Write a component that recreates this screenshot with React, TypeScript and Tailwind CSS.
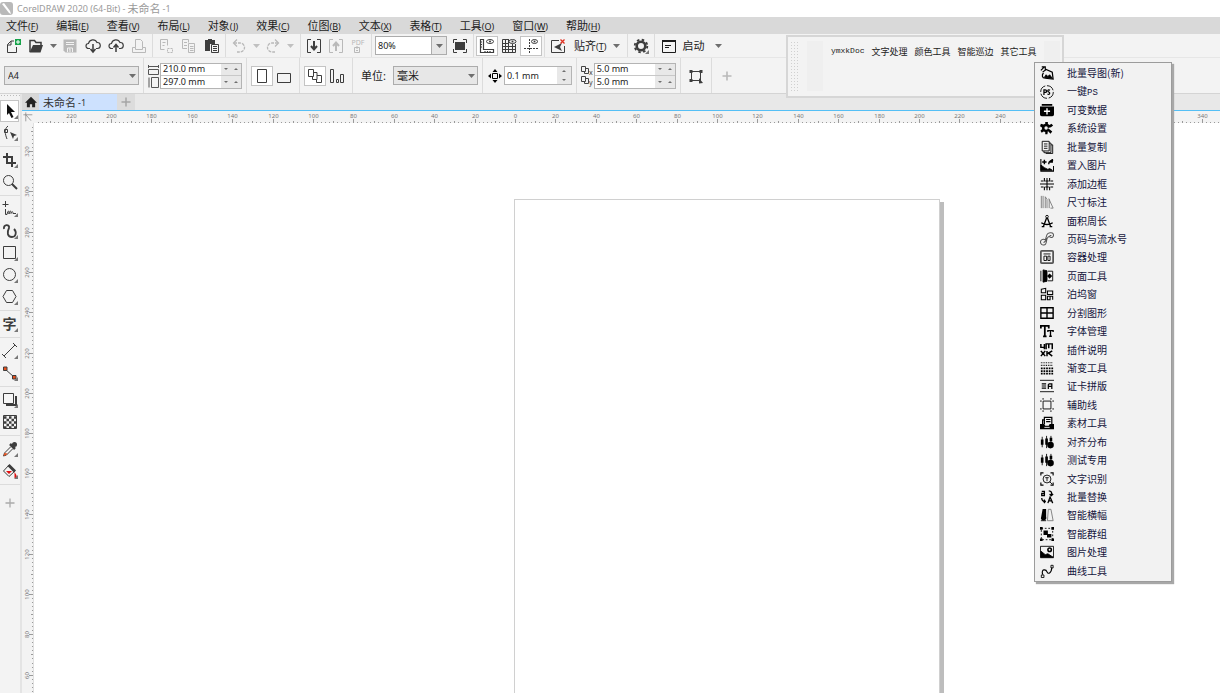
import type { ReactNode } from 'react';

interface IconProps {
  size?: number;
  children: ReactNode;
}

// All icons are drawn on a 16 unit grid
const Icon = ({ size = 16, children }: IconProps) => (
  <svg
    width={size}
    height={size}
    viewBox="0 0 16 16"
    fill="none"
    stroke="currentColor"
    className="shrink-0"
    aria-hidden="true"
  >
    {children}
  </svg>
);

const Caret = () => (
  <svg width="7" height="4" viewBox="0 0 7 4" className="shrink-0" aria-hidden="true">
    <path d="M0 0h7L3.5 4z" fill="currentColor" />
  </svg>
);

interface ToolButtonProps {
  label: string;
  children: ReactNode;
  disabled?: boolean;
  active?: boolean;
}

const ToolButton = ({ label, children, disabled, active }: ToolButtonProps) => (
  <button
    type="button"
    aria-label={label}
    disabled={disabled}
    className={`flex h-5 w-[22px] items-center justify-center border ${
      active ? 'border-[#c4c4c4] bg-white' : 'border-transparent'
    } ${disabled ? 'text-[#b9b9b9]' : 'text-[#3d3d3d]'}`}
  >
    {children}
  </button>
);

const CaretButton = ({ label, disabled }: { label: string; disabled?: boolean }) => (
  <button
    type="button"
    aria-label={label}
    disabled={disabled}
    className={`flex h-5 w-[10px] items-center justify-center ${disabled ? 'text-[#c0c0c0]' : 'text-[#6e6e6e]'}`}
  >
    <Caret />
  </button>
);

const Divider = () => <div className="mx-px w-px self-stretch bg-[#dcdcdc]" />;

const menus = [
  ['文件', 'F'],
  ['编辑', 'E'],
  ['查看', 'V'],
  ['布局', 'L'],
  ['对象', 'J'],
  ['效果', 'C'],
  ['位图', 'B'],
  ['文本', 'X'],
  ['表格', 'T'],
  ['工具', 'O'],
  ['窗口', 'W'],
  ['帮助', 'H'],
];

const TitleBar = () => (
  <header className="flex h-[17px] shrink-0 items-center gap-1 bg-white text-[#9a9a9a]">
    <svg width="13" height="15" viewBox="0 0 13 15" aria-hidden="true">
      <rect x="0" y="1" width="13" height="13" rx="3" fill="#b9b9b9" />
      <path d="M2 3l7 9 2 1-1-3L4 2z" fill="#fff" />
    </svg>
    <h1 className="flex items-center gap-[2px] text-[11px]">
      <span className="text-[9px]">CorelDRAW 2020 (64-Bit) -</span>
      未命名
      <span className="text-[9px]">-1</span>
    </h1>
  </header>
);

const MenuBar = () => (
  <nav className="flex h-[17px] shrink-0 items-center gap-[18px] bg-[#d9d9d9] pl-[6px]">
    {menus.map(([name, key]) => (
      <button key={key} type="button" className="flex items-baseline text-[11px] text-[#1c1c1c]">
        {name}
        <span className="text-[9px]">
          (<u>{key}</u>)
        </span>
      </button>
    ))}
  </nav>
);

const StandardBar = () => (
  <div className="flex h-6 shrink-0 items-center gap-px border-b border-[#e6e6e6] bg-[#f3f3f3] pl-[2px]">
    <ToolButton label="新建">
      <Icon>
        <path d="M9 3H6L2.500 6.500V14.500h9V9M6 3v4H2.500" />
        <path d="M10 1h6v6h-6z" fill="#17a34a" stroke="none" />
        <path d="M13 2v4M11 4h4" stroke="#fff" />
      </Icon>
    </ToolButton>
    <ToolButton label="打开">
      <Icon>
        <path d="M2 14V2.500h4.500L8 4.500h5V7" strokeWidth="1.500" />
        <path d="M1.500 14.500L5 7h10l-2.500 7.500z" fill="currentColor" stroke="none" />
      </Icon>
    </ToolButton>
    <CaretButton label="最近打开" />
    <ToolButton label="保存" disabled>
      <Icon>
        <path d="M1.500 1.500h13v13h-11l-2-2z" fill="currentColor" stroke="none" />
        <path d="M4 4.500h8M4 6.500h8M5.500 14v-4h5v4" stroke="#f3f3f3" />
        <path d="M7 11h1v3" stroke="#f3f3f3" />
      </Icon>
    </ToolButton>
    <ToolButton label="从云下载">
      <Icon>
        <path d="M5 10.500H3.500a2.500 2.500 0 010-5 4.500 4.500 0 018.500-1 3 3 0 01.5 6H11" strokeWidth="1.200" />
        <path d="M8 6v7M5.500 11L8 14l2.500-3" strokeWidth="1.500" />
      </Icon>
    </ToolButton>
    <ToolButton label="上传到云">
      <Icon>
        <path d="M5 10.500H3.500a2.500 2.500 0 010-5 4.500 4.500 0 018.500-1 3 3 0 01.5 6H11" strokeWidth="1.200" />
        <path d="M8 14V7M5.500 9.500L8 6.500l2.500 3" strokeWidth="1.500" />
      </Icon>
    </ToolButton>
    <ToolButton label="打印" disabled>
      <Icon>
        <path d="M4.500 9.500v-8h5l2 2v6M1.500 9.500h3v2h7v-2h3v5h-13z" />
      </Icon>
    </ToolButton>
    <Divider />
    <ToolButton label="剪切" disabled>
      <Icon>
        <path d="M2.500 1.500h7v6M2.500 1.500v10h4M4.500 4.500h3M4.500 7.500h2" />
        <path d="M9.500 10.500h5v4h-5z" strokeDasharray="2 1" />
      </Icon>
    </ToolButton>
    <ToolButton label="复制" disabled>
      <Icon>
        <path d="M6 10.500H1.500v-9h6v3M3 4.500h3M3 7.500h3M7.500 5.500h6v9h-6zM9 8.500h3.500M9 10.500h3.500M9 12.500h3.500" />
      </Icon>
    </ToolButton>
    <ToolButton label="粘贴">
      <Icon>
        <path d="M1 2h3V1h4v1h3v4H6v7H1z" fill="currentColor" stroke="none" />
        <path d="M7.500 6.500h7v8h-7zM9 8.500h4M9 10.500h4M9 12.500h4" />
      </Icon>
    </ToolButton>
    <Divider />
    <div className="flex items-center gap-px pr-[3px]">
      <ToolButton label="撤销" disabled>
        <Icon>
          <path d="M3 5h6a4.500 4.500 0 010 9H6" strokeDasharray="3 1" strokeWidth="1.300" />
          <path d="M6 1.500L2.500 5 6 8.500" strokeWidth="1.300" />
        </Icon>
      </ToolButton>
      <CaretButton label="撤销列表" disabled />
      <ToolButton label="重做" disabled>
        <Icon>
          <path d="M13 5H7a4.500 4.500 0 000 9h3" strokeDasharray="3 1" strokeWidth="1.300" />
          <path d="M10 1.500L13.500 5 10 8.500" strokeWidth="1.300" />
        </Icon>
      </ToolButton>
      <CaretButton label="重做列表" disabled />
    </div>
    <Divider />
    <div className="flex items-center">
      <ToolButton label="导入">
        <Icon>
          <path d="M5 1.500H1.500v13H5M11 1.500h3.500v13H11" />
          <path d="M8 3v8M5 8l3 3.500L11 8" strokeWidth="2" />
        </Icon>
      </ToolButton>
      <ToolButton label="导出" disabled>
        <Icon>
          <path d="M5 1.500H1.500v13H5M11 1.500h3.500v13H11" />
          <path d="M8 13V5M5 8l3-3.500L11 8" strokeWidth="2" />
        </Icon>
      </ToolButton>
      <button
        type="button"
        disabled
        aria-label="发布为 PDF"
        className="flex w-[22px] flex-col items-center text-[7px] leading-[7px] text-[#b9b9b9]"
      >
        PDF
        <svg width="8" height="7" viewBox="0 0 8 7" fill="none" stroke="currentColor" aria-hidden="true">
          <path d="M.5 1.500h5v5h-5zM2 4.500h2M3 0v3" />
        </svg>
      </button>
    </div>
    <Divider />
    <div className="mx-px flex h-[19px] w-[72px] border border-[#acacac] bg-white">
      <input aria-label="缩放级别" defaultValue="80%" className="min-w-0 flex-1 pl-[2px] text-[9px] text-[#222] outline-none" />
      <button
        type="button"
        aria-label="选择缩放级别"
        className="flex w-[15px] items-center justify-center border-l border-[#acacac] bg-[#e6e6e6] text-[#6e6e6e]"
      >
        <Caret />
      </button>
    </div>
    <div className="flex items-center">
      <ToolButton label="全屏预览">
        <Icon>
          <path d="M3 4h10v8H3z" fill="currentColor" stroke="none" />
          <path d="M1.500 5V1.500H5M11 1.500h3.500V5M14.500 11v3.500H11M5 14.500H1.500V11" />
        </Icon>
      </ToolButton>
    </div>
    <Divider />
    <div className="flex items-center">
      <ToolButton label="显示标尺" active>
        <Icon>
          <path d="M1.500 1.500h3v10h10v3h-13zM2 4h1M2 6.500h1M2 9h1M6 14v-1M8.500 14v-1M11 14v-1" strokeWidth="1.200" />
          <ellipse cx="11" cy="3.500" rx="3.500" ry="2" />
          <circle cx="11" cy="3.500" r="1" fill="currentColor" stroke="none" />
        </Icon>
      </ToolButton>
      <ToolButton label="显示网格">
        <Icon>
          <path d="M1.500 1.500h13v13h-13zM4.500 2v12M7.500 2v12M11.500 6v8M1 5.500h13M1 8.500h14M1 11.500h14" />
          <path d="M8 1h8v5H8z" fill="#f3f3f3" stroke="none" />
          <ellipse cx="11.500" cy="3.500" rx="3.500" ry="2" />
          <circle cx="11.500" cy="3.500" r="1" fill="currentColor" stroke="none" />
        </Icon>
      </ToolButton>
      <ToolButton label="显示辅助线" active>
        <Icon>
          <path d="M6.500 1v14M1 10.500h14" strokeDasharray="2 1" />
          <ellipse cx="11.500" cy="3.500" rx="3" ry="2" />
          <circle cx="11.500" cy="3.500" r="1" fill="currentColor" stroke="none" />
        </Icon>
      </ToolButton>
    </div>
    <Divider />
    <ToolButton label="关闭贴齐">
      <Icon>
        <path d="M9 2.500H1.500v12h13V8" />
        <path d="M12 5L4 9l8 4-2-4z" fill="currentColor" stroke="none" />
        <path d="M10.500 1.500l4 4M14.500 1.500l-4 4" stroke="#e02f1f" strokeWidth="1.300" />
      </Icon>
    </ToolButton>
    <button type="button" className="flex items-baseline px-1 text-[11px] text-[#1c1c1c]">
      贴齐
      <span className="text-[9px]">
        (<u>T</u>)
      </span>
    </button>
    <CaretButton label="贴齐选项" />
    <div className="flex items-center gap-px self-stretch pl-1">
      <Divider />
      <ToolButton label="选项">
        <Icon>
          <circle cx="8" cy="8" r="4.300" strokeWidth="2.600" />
          <circle cx="8" cy="8" r="6.300" strokeWidth="1.800" strokeDasharray="2.500 2.450" />
          <path d="M16 12v4h-4z" fill="#777" stroke="none" />
        </Icon>
      </ToolButton>
      <Divider />
    </div>
    <button type="button" className="flex items-center gap-[5px] px-1 text-[11px] text-[#1c1c1c]">
      <Icon>
        <path d="M1.500 2.500h13v12h-13z" />
        <path d="M1 3h14" strokeWidth="2" />
        <path d="M4 7.500h6M4 9.500h4" />
      </Icon>
      启动
    </button>
    <div className="pl-1">
      <CaretButton label="应用程序启动器" />
    </div>
  </div>
);

const SpinArrow = ({ label, up = false }: { label: string; up?: boolean }) => (
  <button type="button" aria-label={label} className="flex">
    <svg width="4" height="2" viewBox="0 0 4 2" aria-hidden="true">
      <path d={up ? 'M0 2h4L2 0z' : 'M0 0h4L2 2z'} fill="currentColor" />
    </svg>
  </button>
);

const PairedInputs = ({ fields }: { fields: { label: string; value: string }[] }) => (
  <div className="w-[82px] divide-y divide-[#c8c8c8] border border-[#b4b4b4] bg-[#e8e8e8]">
    {fields.map((field) => (
      <div key={field.label} className="flex h-3">
        <input
          aria-label={field.label}
          defaultValue={field.value}
          className="min-w-0 flex-1 bg-white pl-[2px] text-[9px] leading-3 text-[#222] outline-none"
        />
        <div className="flex w-5 items-center justify-around text-[#6e6e6e]">
          <SpinArrow label={`减小${field.label}`} />
          <SpinArrow label={`增大${field.label}`} up />
        </div>
      </div>
    ))}
  </div>
);

const DropDown = ({ label, options, className }: { label: string; options: string[]; className: string }) => (
  <div className={`relative text-[#6e6e6e] ${className}`}>
    <select
      aria-label={label}
      className="h-[19px] w-full appearance-none border border-[#acacac] bg-[#e7e7e7] pl-[3px] text-[#1c1c1c] outline-none"
    >
      {options.map((option) => (
        <option key={option}>{option}</option>
      ))}
    </select>
    <span className="pointer-events-none absolute inset-y-0 right-[3px] flex items-center">
      <Caret />
    </span>
  </div>
);

const PropertyBar = () => (
  <div className="flex h-9 shrink-0 items-center gap-[3px] border-b border-[#d4d4d4] bg-[#f3f3f3] pl-1">
    <DropDown label="页面大小" options={['A4', 'A3', 'A5']} className="w-[135px] text-[9px]" />
    <Divider />
    <div className="flex items-center gap-px">
      <svg width="11" height="24" viewBox="0 0 11 24" fill="none" stroke="#555" aria-hidden="true">
        <path d="M.5 1v3M10.500 1v3M.5 2.500h10M.5 5.500h10v5H.5zM1 13.500v10M3.500 13.500h7v10h-7z" />
      </svg>
      <PairedInputs
        fields={[
          { label: '页面宽度', value: '210.0 mm' },
          { label: '页面高度', value: '297.0 mm' },
        ]}
      />
    </div>
    <Divider />
    <div className="flex items-center">
      <ToolButton label="纵向" active>
        <Icon>
          <path d="M3.500 1.500h9v13h-9z" />
        </Icon>
      </ToolButton>
      <ToolButton label="横向">
        <Icon>
          <path d="M1.500 5.500h13v9h-13z" />
        </Icon>
      </ToolButton>
    </div>
    <Divider />
    <div className="flex items-center">
      <ToolButton label="所有页面" active>
        <Icon>
          <path d="M1.500 1.500h5v7h-5zM6.500 4.500H10v7H5.500v-3M10 7.500h4.500v7h-5v-3" />
        </Icon>
      </ToolButton>
      <ToolButton label="当前页面">
        <Icon>
          <path d="M1.500 1.500h3v13h-3zM7.500 11.500h2v3h-2zM11.500 6.500h3v8h-3z" />
        </Icon>
      </ToolButton>
    </div>
    <Divider />
    <span className="pl-1 text-[11px] text-[#1c1c1c]">单位:</span>
    <div className="pl-1">
      <DropDown label="单位" options={['毫米', '厘米', '英寸', '像素']} className="w-[85px] text-[11px]" />
    </div>
    <Divider />
    <div className="flex items-center gap-px">
      <Icon>
        <path d="M5.500 5.500h5v5h-5z" />
        <path d="M8 1l2.500 3h-5zM8 15l2.500-3h-5zM1 8l3-2.500v5zM15 8l-3-2.500v5z" fill="currentColor" stroke="none" />
      </Icon>
      <div className="flex h-[19px] w-[68px] border border-[#b4b4b4] bg-[#e8e8e8]">
        <input aria-label="微调距离" defaultValue="0.1 mm" className="min-w-0 flex-1 bg-white pl-[2px] text-[9px] text-[#222] outline-none" />
        <div className="flex w-[14px] flex-col items-center justify-around text-[#6e6e6e]">
          <SpinArrow label="增大微调距离" up />
          <SpinArrow label="减小微调距离" />
        </div>
      </div>
    </div>
    <Divider />
    <div className="flex items-center gap-px">
      <div className="flex flex-col text-[7px] leading-3 text-[#444]">
        {['x', 'y'].map((axis) => (
          <span key={axis} className="flex items-end">
            <svg width="8" height="10" viewBox="0 0 8 10" fill="none" stroke="currentColor" aria-hidden="true">
              <path d="M.5 .5h4v5h-4zM4.500 2.500h3v5h-4v-2" />
            </svg>
            <span className="leading-[7px]">{axis}</span>
          </span>
        ))}
      </div>
      <PairedInputs
        fields={[
          { label: '再制距离 X', value: '5.0 mm' },
          { label: '再制距离 Y', value: '5.0 mm' },
        ]}
      />
    </div>
    <Divider />
    <ToolButton label="将所有对象视为已填充">
      <Icon>
        <path d="M3.500 3.500h9v9h-9z" />
        <path d="M1.500 2h3v3h-3zM11.500 2h3v3h-3zM1.500 11h3v3h-3zM11 10l4 5-4 .5z" fill="currentColor" stroke="none" />
      </Icon>
    </ToolButton>
    <Divider />
    <ToolButton label="自定义属性栏" disabled>
      <Icon>
        <path d="M8 3.500v9M3.500 8h9" strokeWidth="1.600" />
      </Icon>
    </ToolButton>
  </div>
);

const flyout = <path d="M16 12v4h-4z" fill="#777" stroke="none" />;

const toolGroups: { name: string; icon: ReactNode; active?: boolean }[][] = [
  [
    {
      name: '选择',
      active: true,
      icon: (
        <>
          <path d="M5 1l8 8H9l2.500 5-2 1L7 10l-2 2z" fill="#111" stroke="none" />
          {flyout}
        </>
      ),
    },
    {
      name: '形状',
      icon: (
        <>
          <path d="M6 1C2 4 3 9 5 14M2.500 4.500h3v3h-3z" />
          <path d="M8 7l7 3-3 1-1 3z" fill="currentColor" stroke="none" />
          {flyout}
        </>
      ),
    },
  ],
  [
    {
      name: '裁剪',
      icon: (
        <>
          <path d="M5 1v10h9M1 5h9v10" strokeWidth="2" />
          {flyout}
        </>
      ),
    },
    {
      name: '缩放',
      icon: (
        <>
          <circle cx="6.500" cy="6.500" r="5" />
          <path d="M10 10l5 5" strokeWidth="2" />
        </>
      ),
    },
  ],
  [
    {
      name: '手绘',
      icon: (
        <>
          <path d="M3.500 0v6M.5 3.500h6M3.500 8v5.500H5C6 9 7 9 7 13c1-4 2-4 2-.5 1-3 2-2 2 0h3" />
          {flyout}
        </>
      ),
    },
    {
      name: '艺术笔',
      icon: (
        <>
          <path d="M2 6C1 1 8 1 7 5c-2 4-2 9 3 9 4 0 5-5 2-8" strokeWidth="1.800" />
          {flyout}
        </>
      ),
    },
    {
      name: '矩形',
      icon: (
        <>
          <path d="M1.500 1.500h12v12h-12z" />
          {flyout}
        </>
      ),
    },
    {
      name: '椭圆形',
      icon: (
        <>
          <circle cx="7.500" cy="7.500" r="6" />
          {flyout}
        </>
      ),
    },
    {
      name: '多边形',
      icon: (
        <>
          <path d="M4.500 1.500h6l3.500 6-3.500 6h-6L1 7.500z" />
          {flyout}
        </>
      ),
    },
  ],
  [{ name: '文本', icon: flyout }],
  [
    {
      name: '平行度量',
      icon: (
        <>
          <path d="M2 13L13 2M0 11l4 4M11 0l4 4" />
          {flyout}
        </>
      ),
    },
    {
      name: '连接器',
      icon: (
        <>
          <path d="M3 4l9 8" />
          <path d="M1.500 2h3.500v3.500H1.500zM10.500 10.500H14V14h-3.500z" fill="#e8501c" />
          {flyout}
        </>
      ),
    },
  ],
  [
    {
      name: '阴影',
      icon: (
        <>
          <path d="M4 13h10V4" strokeWidth="2" />
          <path d="M1.500 1.500h10v10h-10z" fill="#f6f6f6" />
          {flyout}
        </>
      ),
    },
    {
      name: '透明度',
      icon: (
        <>
          <path d="M1.500 1.500h13v13h-13z" />
          <path d="M2 3.500h12M2 8.500h12M2 13.500h12" strokeWidth="2.500" strokeDasharray="2.500 2.500" />
          <path d="M4.500 6h10M4.500 11h10" strokeWidth="2.500" strokeDasharray="2.500 2.500" />
        </>
      ),
    },
  ],
  [
    {
      name: '颜色滴管',
      icon: (
        <>
          <path d="M9 5.500L2.500 12l-1 3 3-1L11 7.500" />
          <path d="M1.500 15l1-3 3 .5-1.500 1.500z" fill="#e8501c" stroke="none" />
          <path d="M8 3l5 5M9.500 5.500L13 2.500" strokeWidth="2.500" />
          <circle cx="12.500" cy="3.500" r="2.500" fill="currentColor" stroke="none" />
          {flyout}
        </>
      ),
    },
    {
      name: '交互式填充',
      icon: (
        <>
          <path d="M7 2L1.500 8 7 13.500 13 8z" />
          <path d="M6.500 2l6.500 6.500" strokeWidth="3" />
          <path d="M4 8h6l-3 3zM12.500 9c3 4 3 6 0 6z" fill="#e01010" stroke="none" />
          {flyout}
        </>
      ),
    },
  ],
];

const Toolbox = () => (
  <aside className="flex w-[22px] shrink-0 flex-col gap-[2px] border-r-2 border-[#e4e4e4] bg-[#f3f3f3]">
    <div className="h-1 bg-[radial-gradient(#bbb_1px,transparent_1px)] bg-[length:3px_3px]" />
    {toolGroups.map((group) => (
      <div key={group[0].name} className="flex flex-col border-b border-[#dcdcdc] pb-[2px]">
        {group.map((tool) => (
          <button
            key={tool.name}
            type="button"
            aria-label={tool.name}
            className={`relative flex h-[22px] w-[19px] items-center justify-center text-[#3d3d3d] ${
              tool.active ? 'border border-[#c4c4c4] bg-white' : ''
            }`}
          >
            {tool.name === '文本' && (
              <span className="absolute inset-0 text-[14px] leading-[22px] font-bold">字</span>
            )}
            <Icon>{tool.icon}</Icon>
          </button>
        ))}
      </div>
    ))}
    <button type="button" aria-label="自定义工具箱" className="flex h-8 w-[19px] items-center justify-center text-[#ababab]">
      <Icon>
        <path d="M8 3.500v9M3.500 8h9" strokeWidth="1.300" />
      </Icon>
    </button>
  </aside>
);

const TabStrip = () => (
  <div className="flex h-4 shrink-0 bg-[#e8e8e8] text-[#333]">
    <button type="button" aria-label="欢迎屏幕" className="flex w-[17px] items-center justify-center bg-[#d8d8d8]">
      <Icon size={12}>
        <path d="M8 1L0 9h2.500v6H6.500v-4h3v4h4V9H16z" fill="#222" stroke="none" />
      </Icon>
    </button>
    <button type="button" className="flex w-[78px] items-center gap-[2px] bg-[#cde1fe] pl-1 text-[11px]">
      未命名 <span className="text-[9px]">-1</span>
    </button>
    <button type="button" aria-label="新建文档" className="flex w-[18px] items-center justify-center bg-[#dcdcdc] text-[#a5a5a5]">
      <Icon>
        <path d="M8 3.500v9M3.500 8h9" strokeWidth="1.500" />
      </Icon>
    </button>
  </div>
);

// Pixels per millimetre at 80% zoom
const SCALE = 2.02;
const SCALE_Y = 2.013;
const ORIGIN_X = 481;
const PAGE_TOP = 76;
const PAGE_WIDTH = 210;
const PAGE_HEIGHT = 297;

const toX = (mm: number) => Math.round(ORIGIN_X + mm * SCALE) + 0.5;
const toY = (mm: number) => Math.floor(PAGE_TOP + (PAGE_HEIGHT - mm) * SCALE_Y) - 0.5;

const range = (from: number, to: number, step: number) =>
  Array.from({ length: Math.floor((to - from) / step) + 1 }, (_, i) => from + i * step);

const tickLength = (mm: number) => (mm % 20 === 0 ? 4 : mm % 10 === 0 ? 2 : 1);

const HorizontalRuler = () => (
  <svg className="h-3 w-full" aria-hidden="true">
    {range(-236, 1000, 2).map((mm) => (
      <path key={mm} d={`M${toX(mm)} 12v-${tickLength(mm)}`} stroke="#9a9a9a" />
    ))}
    {range(-220, 340, 20).map((mm) => (
      <text key={mm} x={toX(mm)} y="7" textAnchor="middle" fontSize="6" fill="#777">
        {Math.abs(mm)}
      </text>
    ))}
  </svg>
);

const VerticalRuler = () => (
  <svg className="h-full w-3 shrink-0 border-r border-[#e0e0e0] bg-[#f3f3f3]" aria-hidden="true">
    {range(-400, 332, 2).map((mm) => (
      <path key={mm} d={`M11 ${toY(mm)}h-${tickLength(mm)}`} stroke="#9a9a9a" />
    ))}
    {range(60, 320, 20).map((mm) => (
      <text
        key={mm}
        x="7"
        y={toY(mm)}
        textAnchor="middle"
        fontSize="6"
        fill="#777"
        transform={`rotate(-90 7 ${toY(mm)})`}
      >
        {mm}
      </text>
    ))}
  </svg>
);

const Workspace = () => (
  <main className="flex min-w-0 flex-1 flex-col">
    <TabStrip />
    <div className="flex h-[13px] shrink-0 border-t border-[#55bff5] bg-[#f3f3f3]">
      <div className="w-3 shrink-0 text-[#777]">
        <Icon size={11}>
          <path d="M2 5.500h13M5.500 2v13M6 6l7 8" />
        </Icon>
      </div>
      <HorizontalRuler />
    </div>
    <div className="flex min-h-0 flex-1">
      <VerticalRuler />
      <div className="relative flex-1 overflow-hidden bg-white">
        <div
          className="absolute border border-[#d0d0d0] bg-white shadow-[4px_3px_0_#bdbdbd]"
          style={{
            left: ORIGIN_X - 1,
            top: PAGE_TOP,
            width: Math.round(PAGE_WIDTH * SCALE) + 2,
            height: Math.round(PAGE_HEIGHT * SCALE_Y),
          }}
        />
      </div>
    </div>
  </main>
);

const alignIcon = (
  <>
    <path d="M2.500 2v12M7.500 1v14M12.500 1v8" />
    <path d="M1 5h3v6H1zM6 4h3v7H6zM11 3h3v4h-3z" fill="currentColor" stroke="none" />
    <circle cx="12" cy="11.500" r="3.800" fill="currentColor" stroke="none" />
  </>
);

const pluginItems: { name: string; suffix?: string; icon: ReactNode }[] = [
  {
    name: '批量导图',
    suffix: '(新)',
    icon: (
      <>
        <path d="M1 5l4-4M2 1h4v3M3 7l4-3 7 3 1 8-9-1c-4 0-4-4-2-6" strokeWidth="1.400" />
        <path d="M5 13l2-3 2 2 2-2 3 4z" fill="currentColor" />
      </>
    ),
  },
  {
    name: '一键',
    suffix: 'PS',
    icon: (
      <>
        <circle cx="8" cy="8" r="7.200" strokeDasharray="9 2" />
        <path d="M4.500 11.500V5.500H6a1.500 1.500 0 010 3H4.500M11.500 6C9 4.500 8 7 10 8s1 3.500-1.500 2.200" strokeWidth="1.400" />
      </>
    ),
  },
  {
    name: '可变数据',
    icon: (
      <>
        <path d="M2 1h12v2H2zM0 4h16v9a2 2 0 01-2 2H2a2 2 0 01-2-2z" fill="currentColor" stroke="none" />
        <path d="M8 6v7M4.500 9.500h7" stroke="#fff" strokeWidth="1.600" />
      </>
    ),
  },
  {
    name: '系统设置',
    icon: (
      <>
        <path
          d="M6 1h3v2.500l2 1 2-1.500 2 2-2.500 2L9 8l5 4-2 2.500-3-3-.5 3.500H6v-2.500l-2-.5-2 1.500-1.500-2.500 2-2L2 7 0 6l1-3 3 1 2-1z"
          fill="currentColor"
          stroke="none"
        />
        <circle cx="7" cy="8" r="2" fill="#f2f2f2" stroke="none" />
      </>
    ),
  },
  {
    name: '批量复制',
    icon: <path d="M2.500 1.500h8v11h-8zM10.500 3.500h2v11h-8v-2M12.500 5.500h2v10h-8M4.500 4.500h4M4.500 7h4M4.500 9.500h4" />,
  },
  {
    name: '置入图片',
    icon: (
      <>
        <path d="M1 1v14h14.500V9" strokeWidth="1.200" />
        <path d="M1 14V8l4 3 4 2 2-1 3 2z" fill="currentColor" />
        <path d="M5 2v5M2.500 4.500h5M10 7c0-4 2-4 5-5M10 4.500h4V1" strokeWidth="1.600" />
      </>
    ),
  },
  {
    name: '添加边框',
    icon: <path d="M1 4.500h3M6 4.500h4M12 4.500h3M0 8h16M1 11.500h3M6 11.500h4M12 11.500h3M5 1v4M8 1v14M11 1v4M5 11v4M11 11v4" strokeWidth="1.200" />,
  },
  {
    name: '尺寸标注',
    icon: (
      <g stroke="#777">
        <path d="M1.500 1v14M3.500 1v14M6 15V2l2 3v10M10.500 5v10M10 4l5 11h-3" />
      </g>
    ),
  },
  {
    name: '面积周长',
    icon: (
      <>
        <circle cx="8" cy="3" r="1.500" />
        <path d="M7.500 4.500L4 14M8.500 4.500L12 14M1.500 10c4 2.500 9 2.500 13 0M2 14.500h3M11 14.500h3" strokeWidth="1.500" />
      </>
    ),
  },
  {
    name: '页码与流水号',
    icon: (
      <path
        d="M6 9a3.300 3.300 0 10.500 4.500C8 11 7 8 9 6c1-1 2-1 3 0 3 1 4-2 3-4s-6-1.500-7 1-1 4-2 6M4 12c2 0 3-3 4-5M11 4h2"
        stroke="#555"
        strokeWidth="1.200"
      />
    ),
  },
  {
    name: '容器处理',
    icon: (
      <>
        <rect x="1" y="1" width="14" height="14" rx="1" stroke="#555" strokeWidth="2" />
        <path d="M4 4.500h8M4.500 7h3v5h-3zM9 7h2.500v5H9z" />
      </>
    ),
  },
  {
    name: '页面工具',
    icon: (
      <>
        <path d="M1 2v12M3.500 1l4.500 1v12l-4.500 1z" fill="currentColor" />
        <path d="M9 2.500h5.500v11H9" />
        <path d="M8 8l3-3 3 3-3 3z" fill="currentColor" stroke="none" />
      </>
    ),
  },
  {
    name: '泊坞窗',
    icon: <path d="M1.500 2.500l5-1v5h-5zM8.500 4.500h6v4h-6zM1.500 9.500h5v5h-5zM8.500 10.500h3v4h-3zM12 10.500h2.500v4" strokeWidth="1.200" />,
  },
  {
    name: '分割图形',
    icon: <path d="M1 2h14v12H1zM8 2v12M1 8h14" strokeWidth="1.600" />,
  },
  {
    name: '字体管理',
    icon: (
      <>
        <path d="M1 5V2h9v3M5.500 2v12M3.500 14h4" strokeWidth="2" />
        <path d="M9 9V7.500h6V9M12 7.500V14M10.500 14h3" strokeWidth="1.500" />
      </>
    ),
  },
  {
    name: '插件说明',
    icon: (
      <path
        d="M1 1v4h4V1v6M7 7V1h3v5M10 1h4v6M1 9l5 6M6 9l-5 6M8 9v6M9 12l5-3M9 11l5 4M2 12h3"
        strokeWidth="1.700"
      />
    ),
  },
  {
    name: '渐变工具',
    icon: (
      <>
        <path d="M1 2h14M1 5h14" strokeWidth="1.200" strokeDasharray="1 1" />
        <path d="M1 8.500h14M1 11.500h14M1 14.500h14" strokeWidth="2" strokeDasharray="2 1" />
      </>
    ),
  },
  {
    name: '证卡拼版',
    icon: (
      <>
        <path d="M0 1.500h16M0 14.500h16" />
        <path d="M2 5.500h5M2 8h5M2 10.500h5M9.500 11.500V6.500l1-1h3v6M9 8.500h4" strokeWidth="1.400" />
      </>
    ),
  },
  {
    name: '辅助线',
    icon: <path d="M3.500 3.500h9v9h-9zM3.500 0v2M0 3.500h2M12.500 0v2M14 3.500h2M3.500 14v2M0 12.500h2M12.500 14v2M14 12.500h2" />,
  },
  {
    name: '素材工具',
    icon: (
      <>
        <path d="M3 9V4.500h2M5 9V1.500h8.500V9M7 4h5M7 6.500h5" strokeWidth="1.400" />
        <path d="M0 9h5l1 2h4l1-2h5v6H0z" fill="currentColor" stroke="none" />
        <path d="M5 13h6" stroke="#f2f2f2" />
      </>
    ),
  },
  { name: '对齐分布', icon: alignIcon },
  { name: '测试专用', icon: alignIcon },
  {
    name: '文字识别',
    icon: (
      <>
        <path d="M1 4V1h3M12 1h3v3M15 12v3h-3M4 15H1v-3" strokeWidth="1.300" />
        <circle cx="8" cy="8" r="4.500" />
        <path d="M6 6.500h4M8 6.500v4M11 11l3 3" />
      </>
    ),
  },
  {
    name: '批量替换',
    icon: (
      <path
        d="M2 1.500h3v5H2V4h3M10 1c3 0 4 2 3 5M11 4.500l2 2 2-2M2 9c0 3 1 4 4 4M4.500 11l1.500 2-1.500 2M9 15l2.500-7 3 7M10 12.500h4"
        strokeWidth="1.500"
      />
    ),
  },
  {
    name: '智能横幅',
    icon: (
      <>
        <path d="M3 1h4v9a3 3 0 01-6 2z" fill="currentColor" stroke="none" />
        <path d="M9.500 1.500h3L15 14.500H8.500z" stroke="#777" />
        <path d="M1 14.500h6" />
      </>
    ),
  },
  {
    name: '智能群组',
    icon: (
      <>
        <path d="M1.500 1.500h13v13h-13z" strokeDasharray="2 2" />
        <path d="M0 0h3v3H0zM13 0h3v3h-3zM0 13h3v3H0zM13 13h3v3h-3zM4 4h5v5H4zM8 8h5v4H8z" fill="currentColor" stroke="none" />
      </>
    ),
  },
  {
    name: '图片处理',
    icon: (
      <>
        <path d="M.5 1.500h15v13H.5z" />
        <path d="M1 14V7l5 4 3-1 6 4z" fill="currentColor" />
        <circle cx="11" cy="5.500" r="2" strokeWidth="1.800" />
      </>
    ),
  },
  {
    name: '曲线工具',
    icon: (
      <>
        <path d="M3 12C1 5 7 6 8 9s5 2 5.500-5" strokeWidth="1.300" />
        <path d="M1.500 12.500h3v3h-3zM12.500 1.500h2.500V4.500h-2.500z" />
      </>
    ),
  },
];

const PluginBar = () => (
  <section
    aria-label="ymxkDoc"
    className="absolute top-[35px] left-[786px] flex h-[63px] w-[278px] items-start justify-between border-2 border-[#d6d6d6] bg-[#f3f3f3] px-[2px] pt-1 font-['Noto_Sans_CJK_SC',sans-serif]"
  >
    <div className="h-[52px] w-[10px] bg-[radial-gradient(#d0d0d0_1px,transparent_1px)] bg-[length:3px_3px]" />
    <div className="h-[50px] w-4 bg-[#efefef]" />
    <div className="flex h-5 items-center gap-[7px] text-[9px] text-[#222]">
      <button type="button" className="font-['Liberation_Mono',monospace] text-[8px]">
        ymxkDoc
      </button>
      {['文字处理', '颜色工具', '智能巡边', '其它工具'].map((name) => (
        <button key={name} type="button">
          {name}
        </button>
      ))}
    </div>
    <div className="h-5 w-4 bg-[#efefef]" />
  </section>
);

const PluginMenu = () => (
  <ul
    role="menu"
    className="absolute top-[62px] left-[1034px] grid h-[520px] w-[138px] auto-rows-fr border border-[#9c9c9c] bg-[#f2f2f2] py-px font-['Noto_Sans_CJK_SC',sans-serif] shadow-[2px_2px_1px_#a8a8a8]"
  >
    {pluginItems.map((item) => (
      <li key={item.name} role="none" className="flex">
        <button type="button" role="menuitem" className="flex w-full items-center gap-[13px] pl-[5px] text-[10px] leading-[18px] text-black">
          <Icon size={14}>{item.icon}</Icon>
          <span className="text-[#14143c]">
            {item.name}
            {item.suffix === 'PS' ? (
              <span className="font-['Liberation_Mono',monospace] text-[9px]">PS</span>
            ) : (
              item.suffix
            )}
          </span>
        </button>
      </li>
    ))}
  </ul>
);

const App = () => (
  <div className="relative flex h-screen flex-col overflow-hidden bg-[#f3f3f3] font-['Noto_Sans','Noto_Sans_CJK_SC',sans-serif] leading-none whitespace-nowrap">
    <TitleBar />
    <MenuBar />
    <StandardBar />
    <PropertyBar />
    <div className="flex min-h-0 flex-1">
      <Toolbox />
      <Workspace />
    </div>
    <PluginBar />
    <PluginMenu />
  </div>
);

export default App;
